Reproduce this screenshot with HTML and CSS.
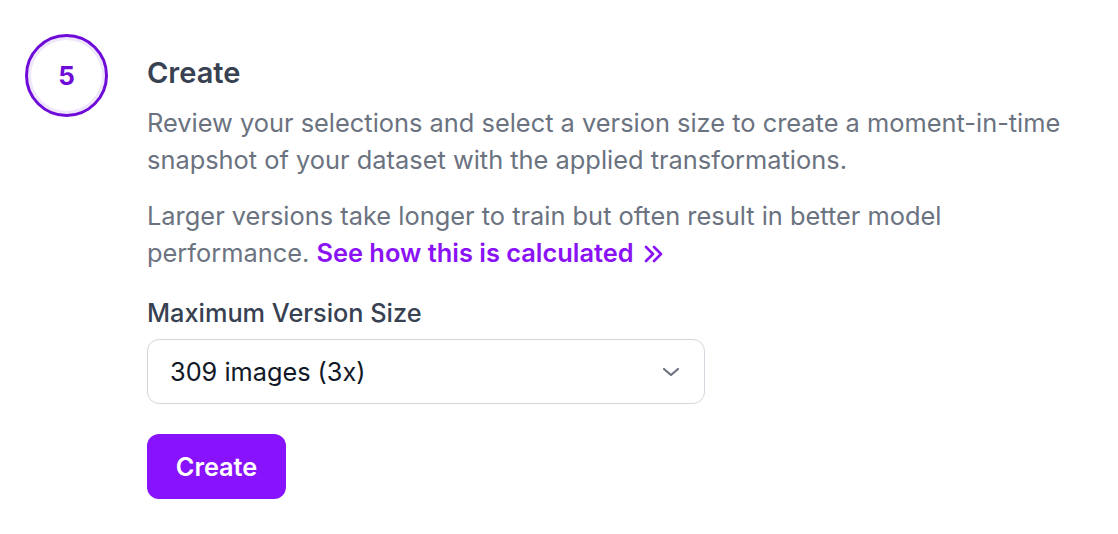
FILE: index.html
```html
<!DOCTYPE html>
<html>
<head>
<meta charset="utf-8">
<link rel="stylesheet" href="styles.css">
</head>
<body>
<div class="step">
  <div class="step-num">5</div>
  <div class="step-body">
    <h2 class="title">Create</h2>
    <p class="desc">Review your selections and select a version size to create a moment-in-time snapshot of your dataset with the applied transformations.</p>
    <p class="desc desc2"><span>Larger versions take longer to train but often result in better model performance.</span> <a class="link" href="#"><span>See how this is calculated</span><svg class="dbl" width="22" height="20" viewBox="0 0 22 20"><path d="M3 3l7 7-7 7M11 3l7 7-7 7" fill="none" stroke="currentColor" stroke-width="2.6" stroke-linecap="round" stroke-linejoin="round"/></svg></a></p>
    <div class="label">Maximum Version Size</div>
    <div class="select">
      <span class="select-text">309 images (3x)</span>
      <svg class="chev" width="18" height="10" viewBox="0 0 18 10"><path d="M2 2l7 6 7-6" fill="none" stroke="#6b7280" stroke-width="2.2" stroke-linecap="round" stroke-linejoin="round"/></svg>
    </div>
    <button class="btn">Create</button>
  </div>
</div>
</body>
</html>
```
FILE: styles.css
```css
html, body {
  margin: 0;
  padding: 0;
  background: #ffffff;
  font-family: Inter, "Noto Sans", sans-serif;
}
.step {
  display: flex;
  gap: 39px;
  padding: 34px 0 0 25px;
}
.step-num {
  flex: none;
  width: 77px;
  height: 77px;
  border: 3px solid #6e0bd9;
  border-radius: 50%;
  box-shadow: inset 0 0 0 3px #efe6fb;
  display: flex;
  align-items: center;
  justify-content: center;
  color: #6e0bd9;
  font-weight: 700;
  font-size: 26px;
}
.step-body {
  display: flex;
  flex-direction: column;
  align-items: flex-start;
  padding-top: 21px;
}
.title {
  margin: 0;
  font-size: 29px;
  line-height: 36px;
  font-weight: 600;
  color: #374151;
}
.desc {
  margin: 0;
  margin-top: 13px;
  font-size: 25.4px;
  line-height: 37px;
  color: #6b7280;
  width: 935px;
}
.desc2 {
  margin-top: 19px;
}
.link {
  color: #8a12f5;
  font-weight: 600;
  text-decoration: none;
}
.dbl {
  vertical-align: -2px;
  margin-left: 9px;
}
.label {
  margin-top: 25px;
  font-size: 25.3px;
  line-height: 34px;
  font-weight: 500;
  color: #374151;
}
.select {
  margin-top: 9px;
  box-sizing: border-box;
  width: 558px;
  height: 65px;
  border: 1px solid #d5d6de;
  border-radius: 12px;
  display: flex;
  align-items: center;
  justify-content: space-between;
  padding: 0 24px 0 22px;
}
.select-text {
  font-size: 25.3px;
  color: #111827;
}
.btn {
  margin-top: 30px;
  width: 139px;
  height: 65px;
  border: none;
  border-radius: 12px;
  background: #8712fb;
  color: #ffffff;
  font-family: Inter, "Noto Sans", sans-serif;
  font-size: 25.3px;
  font-weight: 600;
}
```
